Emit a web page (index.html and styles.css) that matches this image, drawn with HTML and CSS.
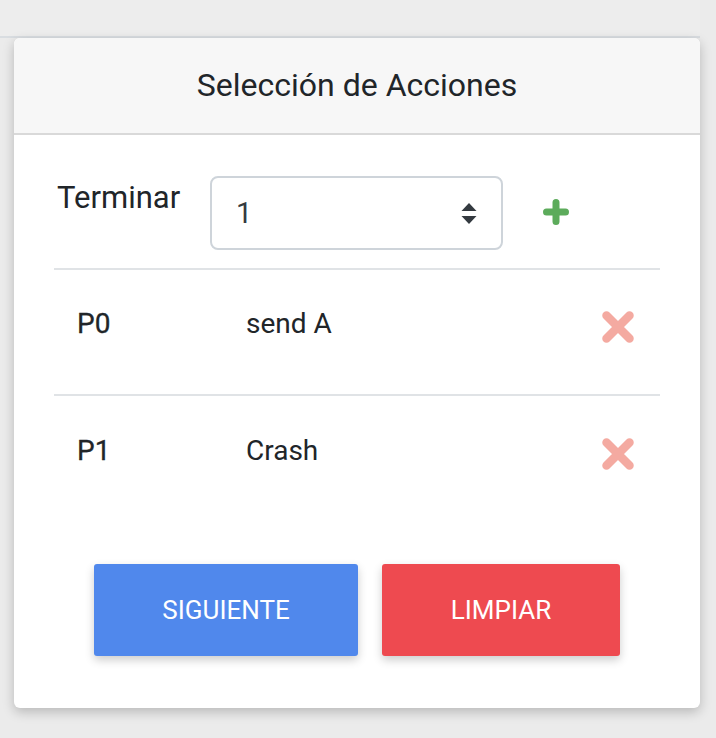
FILE: index.html
```html
<!DOCTYPE html>
<html lang="es">
<head>
<meta charset="utf-8">
<link rel="stylesheet" href="styles.css">
</head>
<body>
<div class="topbar"></div>
<div class="card">
  <div class="card-header">Selección de Acciones</div>
  <div class="card-body">
    <div class="form-row">
      <label class="label">Terminar</label>
      <div class="select">
        <span class="select-value">1</span>
        <svg class="spinner" width="16" height="21" viewBox="0 0 16 21"><path d="M8 0 L15.5 8 H0.5 Z M8 21 L15.5 13 H0.5 Z" fill="#343a40"/></svg>
      </div>
      <svg class="plus" width="26" height="26" viewBox="0 0 26 26"><path d="M13 3.5 V22.5 M3.5 13 H22.5" stroke="#5cab5b" stroke-width="7" stroke-linecap="round"/></svg>
    </div>
    <div class="row row-divided">
      <span class="proc">P0</span>
      <span class="action">send A</span>
      <svg class="remove" width="34" height="34" viewBox="0 0 34 34"><path d="M5.5 5.5 L28.5 28.5 M28.5 5.5 L5.5 28.5" stroke="#f4aaa1" stroke-width="8.5" stroke-linecap="round"/></svg>
    </div>
    <div class="row">
      <span class="proc">P1</span>
      <span class="action">Crash</span>
      <svg class="remove" width="34" height="34" viewBox="0 0 34 34"><path d="M5.5 5.5 L28.5 28.5 M28.5 5.5 L5.5 28.5" stroke="#f4aaa1" stroke-width="8.5" stroke-linecap="round"/></svg>
    </div>
    <div class="buttons">
      <button class="btn btn-next">SIGUIENTE</button>
      <button class="btn btn-clear">LIMPIAR</button>
    </div>
  </div>
</div>
</body>
</html>
```
FILE: styles.css
```css
* { box-sizing: border-box; }
html, body { margin: 0; padding: 0; }
body {
  background: #ebebeb;
  font-family: Roboto, "Liberation Sans", sans-serif;
  color: #212529;
  width: 716px;
  height: 738px;
  overflow: hidden;
}
.topbar {
  height: 38px;
  width: 700px;
  background: #ededed;
  border-bottom: 2px solid #d9dde1;
}
.card {
  margin-left: 14px;
  width: 686px;
  height: 670px;
  background: #fff;
  border-radius: 6px;
  box-shadow: 0 4px 12px rgba(0,0,0,0.22);
  overflow: hidden;
}
.card-header {
  height: 97px;
  background: #f7f7f7;
  border-bottom: 2px solid #d9d9d9;
  text-align: center;
  font-size: 32px;
  line-height: 95px;
  color: #212529;
}
.card-body {
  padding: 40px 40px 0 40px;
}
.form-row {
  display: flex;
  align-items: flex-start;
  padding: 0 0 19px 0;
  border-bottom: 2px solid #e0e3e6;
}
.label {
  font-size: 31px;
  margin-left: 3px;
  margin-top: 4px;
  width: 153px;
}
.select {
  width: 293px;
  height: 74px;
  margin-top: 1px;
  margin-bottom: -1px;
  border: 2px solid #ced4da;
  border-radius: 8px;
  display: flex;
  align-items: center;
  justify-content: space-between;
  padding: 0 24px 0 24px;
}
.select-value {
  font-size: 29px;
  color: #343a40;
}
.plus {
  margin-left: 40px;
  margin-top: 24px;
}
.row {
  display: flex;
  align-items: center;
  height: 126px;
  padding-bottom: 18px;
  font-size: 28px;
}
.row-divided {
  border-bottom: 2px solid #e0e3e6;
}
.proc {
  width: 192px;
  padding-left: 23px;
  font-weight: 400;
  -webkit-text-stroke: 0.3px #212529;
  color: #212529;
}
.action {
  flex: 1;
  color: #212529;
}
.remove {
  margin-right: 25px;
  margin-top: 8px;
}
.buttons {
  display: flex;
  justify-content: center;
  gap: 24px;
  margin-top: 42px;
}
.btn {
  height: 92px;
  border: none;
  border-radius: 3px;
  color: #fff;
  font-family: Roboto, "Liberation Sans", sans-serif;
  font-size: 26px;
  box-shadow: 0 4px 10px rgba(0,0,0,0.2);
  padding: 0;
}
.btn-next { width: 264px; background: #5088ec; }
.btn-clear { width: 238px; background: #ee4a50; }
```
